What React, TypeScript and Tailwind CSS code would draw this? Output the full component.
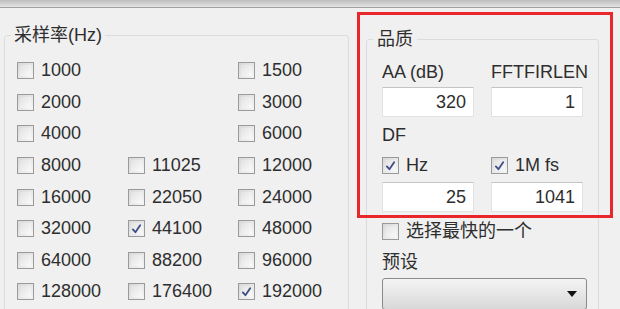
import React from 'react';

const FONT = '"Liberation Sans", "Noto Sans CJK SC", sans-serif';

type Rate = { v: string; checked?: boolean } | null;

const rows: Rate[][] = [
  [{ v: '1000' }, null, { v: '1500' }],
  [{ v: '2000' }, null, { v: '3000' }],
  [{ v: '4000' }, null, { v: '6000' }],
  [{ v: '8000' }, { v: '11025' }, { v: '12000' }],
  [{ v: '16000' }, { v: '22050' }, { v: '24000' }],
  [{ v: '32000' }, { v: '44100', checked: true }, { v: '48000' }],
  [{ v: '64000' }, { v: '88200' }, { v: '96000' }],
  [{ v: '128000' }, { v: '176400' }, { v: '192000', checked: true }],
];

const Box = ({ checked }: { checked?: boolean }) => (
  <span className="w-[17px] h-[17px] shrink-0 border border-[#9a9a9a] bg-gradient-to-br from-[#d8d8d8] to-[#f6f6f6] p-[2px] flex items-center justify-center">
    <span className="w-full h-full bg-gradient-to-br from-[#e2e2e2] to-[#fafafa] flex items-center justify-center">
      {checked && (
        <svg width="12" height="12" viewBox="0 0 12 12" fill="none">
          <path d="M2 6.5 L4.8 9.5 L10 2" stroke="#3d4f86" strokeWidth="2" strokeLinecap="round" strokeLinejoin="round" />
        </svg>
      )}
    </span>
  </span>
);

const Check = ({ label, checked }: { label: string; checked?: boolean }) => (
  <div className="flex items-center gap-[7px] text-[18px] text-[#2e2e2e]">
    <Box checked={checked} />
    <span>{label}</span>
  </div>
);

const Field = ({ value }: { value: string }) => (
  <div className="w-[92px] h-[30px] bg-white border border-[#e2e2e2] border-t-[#c4c4c4] flex items-center justify-end pr-[7px] text-[18px] text-[#2e2e2e]">
    {value}
  </div>
);

export default function App() {
  return (
    <div className="w-[620px] h-[309px] bg-[#f0f0f0] overflow-hidden relative" style={{ fontFamily: FONT }}>
      <div className="h-[8px] bg-gradient-to-b from-[#bdbdbd] to-[#e4e4e4] border-b border-[#a0a0a0]" />

      <div className="flex pl-[4px] pt-[16px]">
        <fieldset className="w-[344px] h-[300px] border border-[#dcdcdc] rounded-[3px]">
          <legend className="ml-[6px] px-[3px] text-[18px] leading-[22px] text-[#2e2e2e]">采样率(Hz)</legend>
          <div className="flex flex-col pl-[12px] pt-[9px]">
            {rows.map((r, i) => (
              <div key={i} className="grid grid-cols-[111px_110px_110px] h-[31.6px] items-center">
                {r.map((c, j) => (c ? <Check key={j} label={c.v} checked={c.checked} /> : <span key={j} />))}
              </div>
            ))}
          </div>
        </fieldset>

        <fieldset className="ml-[17px] mt-[4px] w-[233px] h-[300px] border border-[#dcdcdc] rounded-[3px]">
          <legend className="ml-[6px] px-[4px] text-[18px] leading-[22px] text-[#2e2e2e]">品质</legend>
          <div className="pl-[15px] pr-[10px] pt-[11px]">
            <div className="flex gap-[17px]">
              <div className="flex flex-col gap-[4px]">
                <span className="text-[18px] leading-[22px] text-[#2e2e2e]">AA (dB)</span>
                <Field value="320" />
              </div>
              <div className="flex flex-col gap-[4px]">
                <span className="text-[18px] leading-[22px] text-[#2e2e2e]">FFTFIRLEN</span>
                <Field value="1" />
              </div>
            </div>
            <div className="text-[18px] leading-[22px] text-[#2e2e2e] mt-[7px]">DF</div>
            <div className="flex gap-[17px] mt-[6px]">
              <div className="flex flex-col gap-[3px] w-[92px]">
                <Check label="Hz" checked />
                <Field value="25" />
              </div>
              <div className="flex flex-col gap-[3px] w-[92px]">
                <Check label="1M fs" checked />
                <Field value="1041" />
              </div>
            </div>
            <div className="mt-[6px]">
              <Check label="选择最快的一个" />
            </div>
            <div className="text-[18px] leading-[22px] text-[#2e2e2e] mt-[6px]">预设</div>
            <div className="mt-[5px] w-[205px] h-[32px] border border-[#8a8a8a] rounded-[3px] bg-gradient-to-b from-[#f4f4f4] to-[#d8d8d8] flex items-center justify-end pr-[9px]">
              <svg width="10" height="6" viewBox="0 0 10 6">
                <path d="M0 0 H10 L5 6 Z" fill="#111" />
              </svg>
            </div>
          </div>
        </fieldset>
      </div>

      <div className="absolute left-[357px] top-[12px] w-[256px] h-[206px] border-[3px] border-[#e8262c] pointer-events-none" />
    </div>
  );
}
